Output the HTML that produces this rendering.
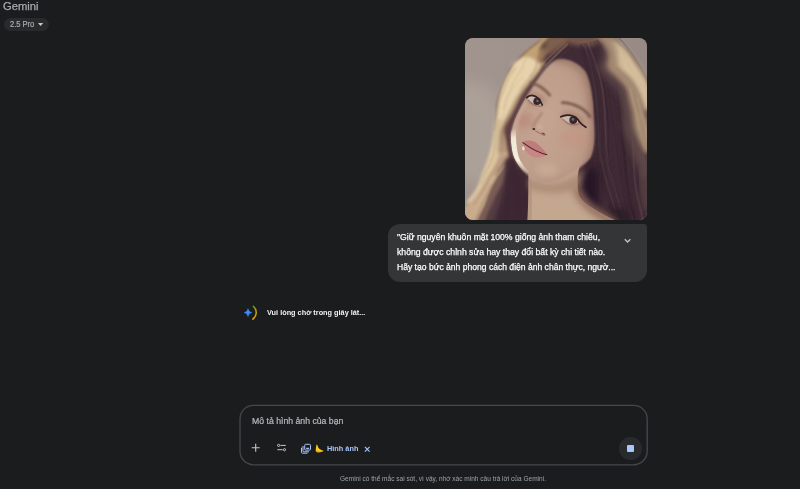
<!DOCTYPE html>
<html lang="vi">
<head>
<meta charset="utf-8">
<title>Gemini</title>
<style>
*{box-sizing:border-box;margin:0;padding:0}
html,body{width:800px;height:489px;overflow:hidden;background:#1b1c1d}
body{position:relative;font-family:"Liberation Sans",sans-serif;color:#e3e3e3}
.abs{position:absolute;white-space:nowrap}
.abs{transform-origin:0 0}
#title{left:3.4px;top:-0.7px;font-size:10.6px;line-height:14px;color:#a6a9ad;-webkit-text-stroke:0.25px #a6a9ad;transform:scaleX(1.06)}
#pill{left:3.5px;top:18px;width:45.5px;height:12.5px;border-radius:7px;background:#282a2c}
#pilltxt{left:9.6px;top:18.8px;font-size:8.2px;line-height:11px;color:#aaadb1;-webkit-text-stroke:0.2px #aaadb1;transform:scaleX(0.918)}
#photo{left:464.8px;top:37.5px;width:182.6px;height:182.6px;border-radius:8px;overflow:hidden;background:#5a4640}
#bubble{left:388px;top:223.8px;width:259.2px;height:58.4px;background:#333537;border-radius:12px 3px 12px 12px}
.bl{left:397.1px;font-size:9.2px;line-height:12px;color:#fff;-webkit-text-stroke:0.25px #fff}
#l1{top:231.3px;transform:scaleX(0.941)}
#l2{top:246.2px;transform:scaleX(0.942)}
#l3{top:260.9px;transform:scaleX(0.932)}
#wait{left:267.4px;top:306.7px;font-size:7.9px;line-height:11px;font-weight:bold;color:#f0f1f2;transform:scaleX(0.9266)}
#ph{left:251.5px;top:414.8px;font-size:8.6px;line-height:12px;color:#b4b7bb;-webkit-text-stroke:0.22px #b4b7bb;transform:scaleX(1.012)}
#chip{left:326.6px;top:442.8px;font-size:7.3px;line-height:11px;font-weight:bold;color:#a8c7fa;transform:scaleX(1.006)}
#stop{left:619.3px;top:437.3px;width:22.4px;height:22.4px;border-radius:50%;background:#282a2d}
#stopsq{left:627.1px;top:445.2px;width:7px;height:7px;border-radius:1px;background:#a8c7fa}
#foot{left:340.2px;top:474px;font-size:6.5px;line-height:10px;color:#a0a3a7;transform:scaleX(1.005)}
svg{position:absolute;overflow:visible}
</style>
</head>
<body>
<div id="title" class="abs">Gemini</div>
<div id="pill" class="abs"></div>
<div id="pilltxt" class="abs">2.5 Pro</div>
<svg id="caretsvg" style="left:37px;top:22px" width="8" height="6" viewBox="0 0 8 6"><path d="M0.9 0.9 H6.3 L3.6 4.1Z" fill="#c3c6ca"/></svg>

<div id="photo" class="abs"><!--PHOTO--><svg width="182.6" height="182.6" viewBox="0 0 182 182" preserveAspectRatio="none" style="left:0;top:0">
<defs>
<filter id="b05" x="-20%" y="-20%" width="140%" height="140%"><feGaussianBlur stdDeviation="0.5"/></filter>
<filter id="b05s" x="-10%" y="-10%" width="120%" height="120%"><feGaussianBlur stdDeviation="0.7"/></filter>
<filter id="b1" x="-20%" y="-20%" width="140%" height="140%"><feGaussianBlur stdDeviation="1.1"/></filter>
<filter id="b2" x="-30%" y="-30%" width="160%" height="160%"><feGaussianBlur stdDeviation="2.2"/></filter>
<filter id="b3" x="-30%" y="-30%" width="160%" height="160%"><feGaussianBlur stdDeviation="3"/></filter>
<filter id="b4" x="-40%" y="-40%" width="180%" height="180%"><feGaussianBlur stdDeviation="4"/></filter>
<filter id="b6" x="-50%" y="-50%" width="200%" height="200%"><feGaussianBlur stdDeviation="6"/></filter>
<filter id="b8" x="-50%" y="-50%" width="200%" height="200%"><feGaussianBlur stdDeviation="8"/></filter>
<linearGradient id="bgg" x1="0" y1="0" x2="1" y2="0"><stop offset="0" stop-color="#a1948f"/><stop offset="0.5" stop-color="#9f918c"/><stop offset="1" stop-color="#978984"/></linearGradient>
<radialGradient id="faceg" cx="0.4" cy="0.5" r="0.7"><stop offset="0" stop-color="#c5a591"/><stop offset="0.6" stop-color="#bf9f8c"/><stop offset="1" stop-color="#b08d7c"/></radialGradient>
<clipPath id="facec"><path d="M91 22 C82 26 76 36 67 49 C59 62 47 82 45.500 98 C46 108 47 116 50.500 122 C54.500 129.500 61 136.500 71 141.500 C78 144.500 86 144 94 141 C104 137 118 128 125 119 C130 108 129 92 128 80 C127.500 64 126 46 120 34 C114 25 100 19 91 22Z"/></clipPath>
<linearGradient id="rimg" gradientUnits="userSpaceOnUse" x1="0" y1="90" x2="0" y2="136"><stop offset="0" stop-color="#f5efdd" stop-opacity="0"/><stop offset="0.22" stop-color="#f5efdd" stop-opacity="0.9"/><stop offset="0.7" stop-color="#f5efdd" stop-opacity="1"/><stop offset="0.85" stop-color="#f0e4d0" stop-opacity="0.5"/><stop offset="1" stop-color="#f0e4d0" stop-opacity="0"/></linearGradient>
<clipPath id="all"><rect width="182" height="182"/></clipPath>
</defs>
<g clip-path="url(#all)">
<rect width="182" height="182" fill="url(#bgg)"/>
<ellipse cx="8" cy="95" rx="32" ry="52" fill="#ada299" filter="url(#b8)" opacity="0.9"/>
<path d="M86 -4 C74 2 58 14 45 30 C38 42 33 56 31 68 C30 84 30 100 28 116 C25 132 18 150 4 168 L2 186 L186 186 L186 47 L182 41 L175.500 30 L168.500 20 L160.500 10 L151 4 L141 -4Z" fill="#3f2c36" filter="url(#b1)"/>
<path d="M104 -3 L140 -3 C138 2 134 7 128 8 C120 9 112 8 104 6Z" fill="#775a50" filter="url(#b2)" opacity="0.95"/>
<g fill="none" filter="url(#b05s)" stroke-linecap="round"><path d="M102.5 6.4 Q64.6 40.3 54.9 59.9 Q45.3 79.4 42.5 95.5 Q39.6 111.6 44.1 128.1 Q48.6 144.5 49.2 164.5 L49.8 184.5" stroke="#5a4040" stroke-width="1.4" opacity="0.17"/><path d="M102.7 6.5 Q67.4 41.2 56.3 60.3 Q45.3 79.4 42.6 95.5 Q39.8 111.5 44.8 127.9 Q49.8 144.2 49.7 164.3 L49.6 184.5" stroke="#c9b08e" stroke-width="1.1" opacity="0.13"/><path d="M99.5 5.0 Q61.5 39.4 51.7 59.0 Q41.9 78.6 39.2 95.7 Q36.5 112.7 38.4 129.7 Q40.3 146.8 38.2 164.6 L36.1 182.5" stroke="#d6c3a6" stroke-width="1.6" opacity="0.19"/><path d="M106.1 8.1 Q69.8 41.9 58.4 60.9 Q47.0 79.8 45.2 95.0 Q43.3 110.2 50.2 126.3 Q57.0 142.3 56.9 163.9 L56.9 185.5" stroke="#6b4f48" stroke-width="1.1" opacity="0.20"/><path d="M96.6 3.7 Q58.4 38.4 49.0 58.3 Q39.6 78.1 36.8 95.9 Q34.1 113.6 34.0 131.0 Q33.9 148.5 30.7 164.8 L27.4 181.2" stroke="#c9b08e" stroke-width="1.3" opacity="0.15"/><path d="M93.9 2.5 Q54.2 37.2 46.5 57.5 Q38.7 77.9 35.1 96.2 Q31.6 114.5 29.5 132.4 Q27.4 150.2 23.6 165.2 L19.8 180.1" stroke="#c9b08e" stroke-width="1.6" opacity="0.23"/><path d="M99.2 4.9 Q61.7 39.5 52.4 59.2 Q43.1 78.9 40.4 95.6 Q37.6 112.3 41.8 128.8 Q46.1 145.2 43.0 164.1 L40.0 183.1" stroke="#4a3238" stroke-width="1.2" opacity="0.31"/><path d="M100.5 5.5 Q65.2 40.5 54.6 59.8 Q43.9 79.1 41.8 95.3 Q39.6 111.6 43.8 128.1 Q48.0 144.7 47.6 164.4 L47.3 184.1" stroke="#5a4040" stroke-width="1.4" opacity="0.30"/><path d="M93.9 2.5 Q56.6 37.9 47.4 57.9 Q38.3 77.8 35.3 96.0 Q32.4 114.2 31.8 131.7 Q31.3 149.2 27.2 164.9 L23.1 180.6" stroke="#4a3238" stroke-width="1.3" opacity="0.23"/><path d="M93.3 2.2 Q57.1 38.0 48.1 58.0 Q39.0 78.0 36.0 96.0 Q32.9 114.0 32.4 131.5 Q31.8 149.1 27.9 164.9 L24.0 180.7" stroke="#6b4f48" stroke-width="1.0" opacity="0.21"/><path d="M98.7 4.7 Q62.1 39.6 52.5 59.2 Q42.9 78.9 39.5 95.9 Q36.2 112.9 37.6 130.0 Q39.0 147.1 38.1 164.9 L37.1 182.6" stroke="#6b4f48" stroke-width="1.9" opacity="0.33"/><path d="M93.8 2.5 Q56.6 37.9 47.7 57.9 Q38.7 77.9 36.0 95.9 Q33.3 113.9 31.7 131.7 Q30.0 149.5 28.7 165.4 L27.3 181.2" stroke="#d6c3a6" stroke-width="1.0" opacity="0.20"/><path d="M98.9 4.8 Q60.5 39.1 51.0 58.8 Q41.4 78.5 38.3 95.9 Q35.1 113.2 36.9 130.2 Q38.7 147.2 38.5 165.0 L38.4 182.8" stroke="#c9b08e" stroke-width="1.2" opacity="0.15"/><path d="M101.7 6.1 Q65.6 40.6 54.6 59.8 Q43.6 79.0 41.0 95.5 Q38.3 112.1 42.8 128.5 Q47.3 144.9 46.6 164.4 L45.9 183.9" stroke="#d6c3a6" stroke-width="1.8" opacity="0.25"/><path d="M132.4 2.5 Q149.6 31.4 151.9 53.9 Q154.3 76.5 157.1 97.2 Q159.9 118.0 160.5 134.0 Q161.2 150.0 166.6 168.0 L171.9 186.0" stroke="#3a2830" stroke-width="1.7" opacity="0.21"/><path d="M119.4 5.9 Q131.4 38.3 134.2 60.4 Q137.1 82.5 135.7 100.2 Q134.4 118.0 137.8 134.0 Q141.2 150.0 148.5 168.0 L155.8 186.0" stroke="#3a2830" stroke-width="1.9" opacity="0.19"/><path d="M150.7 -2.2 Q174.7 21.7 179.8 43.7 Q184.9 65.7 186.2 91.8 Q187.5 118.0 186.7 134.0 Q185.9 150.0 188.7 168.0 L191.5 186.0" stroke="#6a5250" stroke-width="1.9" opacity="0.30"/><path d="M130.5 3.0 Q149.7 31.3 152.2 53.8 Q154.7 76.3 156.7 97.2 Q158.7 118.0 160.7 134.0 Q162.7 150.0 166.5 168.0 L170.3 186.0" stroke="#2e1f28" stroke-width="1.1" opacity="0.19"/><path d="M120.9 5.5 Q136.8 36.2 139.8 58.4 Q142.8 80.5 143.0 99.3 Q143.2 118.0 145.4 134.0 Q147.7 150.0 154.1 168.0 L160.5 186.0" stroke="#2e1f28" stroke-width="1.0" opacity="0.32"/><path d="M129.3 3.3 Q143.8 33.5 148.5 55.2 Q153.1 76.9 152.4 97.4 Q151.8 118.0 154.9 134.0 Q158.1 150.0 162.0 168.0 L165.9 186.0" stroke="#3a2830" stroke-width="1.4" opacity="0.23"/><path d="M148.9 -1.7 Q169.9 23.6 174.5 45.6 Q179.1 67.7 180.5 92.9 Q182.0 118.0 184.7 134.0 Q187.4 150.0 189.2 168.0 L191.1 186.0" stroke="#5e4a4a" stroke-width="1.7" opacity="0.30"/><path d="M127.4 3.8 Q141.7 34.4 144.0 56.8 Q146.3 79.3 149.5 98.6 Q152.7 118.0 154.5 134.0 Q156.3 150.0 161.2 168.0 L166.1 186.0" stroke="#33232b" stroke-width="1.1" opacity="0.35"/><path d="M143.9 -0.4 Q166.7 24.8 172.0 46.6 Q177.2 68.4 179.3 93.2 Q181.3 118.0 181.1 134.0 Q180.8 150.0 184.0 168.0 L187.1 186.0" stroke="#2e1f28" stroke-width="1.3" opacity="0.33"/><path d="M131.3 2.8 Q150.4 31.0 152.4 53.7 Q154.3 76.4 156.4 97.2 Q158.5 118.0 159.7 134.0 Q160.9 150.0 165.7 168.0 L170.5 186.0" stroke="#2e1f28" stroke-width="1.9" opacity="0.32"/><path d="M137.3 1.3 Q154.0 29.7 157.4 51.9 Q160.9 74.1 163.1 96.1 Q165.4 118.0 165.9 134.0 Q166.5 150.0 170.6 168.0 L174.6 186.0" stroke="#3a2830" stroke-width="1.9" opacity="0.26"/><path d="M118.9 6.0 Q130.8 38.5 132.7 61.0 Q134.5 83.4 136.1 100.7 Q137.6 118.0 140.5 134.0 Q143.3 150.0 149.9 168.0 L156.5 186.0" stroke="#2e1f28" stroke-width="1.7" opacity="0.24"/><path d="M132.7 2.4 Q151.7 30.6 154.4 53.0 Q157.0 75.5 158.0 96.7 Q159.0 118.0 161.1 134.0 Q163.2 150.0 168.6 168.0 L174.0 186.0" stroke="#33232b" stroke-width="2.0" opacity="0.33"/><path d="M121.9 5.2 Q136.1 36.5 138.2 58.9 Q140.4 81.4 140.4 99.7 Q140.5 118.0 144.7 134.0 Q149.0 150.0 154.4 168.0 L159.8 186.0" stroke="#7a625c" stroke-width="2.1" opacity="0.26"/><path d="M121.2 5.4 Q135.0 36.9 135.7 59.8 Q136.4 82.7 138.7 100.4 Q141.0 118.0 144.5 134.0 Q148.1 150.0 152.6 168.0 L157.1 186.0" stroke="#33232b" stroke-width="1.0" opacity="0.33"/><path d="M137.4 1.2 Q159.4 27.6 164.0 49.5 Q168.7 71.4 168.1 94.7 Q167.5 118.0 169.3 134.0 Q171.0 150.0 174.6 168.0 L178.1 186.0" stroke="#7a625c" stroke-width="1.6" opacity="0.12"/><path d="M128.7 3.5 Q146.9 32.4 150.7 54.4 Q154.5 76.4 154.8 97.2 Q155.2 118.0 156.5 134.0 Q157.8 150.0 164.7 168.0 L171.6 186.0" stroke="#2e1f28" stroke-width="1.2" opacity="0.17"/><path d="M145.6 -0.9 Q170.8 23.2 175.7 45.2 Q180.6 67.2 182.1 92.6 Q183.6 118.0 183.9 134.0 Q184.2 150.0 187.1 168.0 L190.0 186.0" stroke="#5e4a4a" stroke-width="1.6" opacity="0.29"/><path d="M138.1 1.1 Q157.8 28.2 163.3 49.8 Q168.8 71.3 169.2 94.7 Q169.5 118.0 170.2 134.0 Q170.9 150.0 176.3 168.0 L181.8 186.0" stroke="#33232b" stroke-width="2.0" opacity="0.17"/><path d="M118.6 6.1 Q129.9 38.9 131.3 61.5 Q132.7 84.0 133.4 101.0 Q134.1 118.0 138.8 134.0 Q143.5 150.0 148.6 168.0 L153.7 186.0" stroke="#5e4a4a" stroke-width="2.1" opacity="0.25"/><path d="M148.1 -1.5 Q171.1 23.1 177.9 44.4 Q184.7 65.8 185.3 91.9 Q186.0 118.0 186.3 134.0 Q186.6 150.0 188.1 168.0 L189.6 186.0" stroke="#3a2830" stroke-width="1.3" opacity="0.19"/><path d="M114.8 7.1 Q126.1 40.4 129.1 62.3 Q132.2 84.2 131.8 101.1 Q131.3 118.0 134.3 134.0 Q137.4 150.0 145.0 168.0 L152.6 186.0" stroke="#2e1f28" stroke-width="1.7" opacity="0.28"/><path d="M138.1 1.1 Q159.7 27.5 163.8 49.6 Q168.0 71.6 167.2 94.8 Q166.3 118.0 167.9 134.0 Q169.4 150.0 173.3 168.0 L177.2 186.0" stroke="#5e4a4a" stroke-width="1.0" opacity="0.25"/><path d="M151.3 -2.3 Q175.1 21.6 177.9 44.4 Q180.8 67.1 184.0 92.6 Q187.1 118.0 188.2 134.0 Q189.4 150.0 190.3 168.0 L191.3 186.0" stroke="#5e4a4a" stroke-width="2.0" opacity="0.27"/><path d="M137.7 1.2 Q157.3 28.4 161.2 50.5 Q165.1 72.7 166.5 95.3 Q168.0 118.0 168.9 134.0 Q169.8 150.0 174.2 168.0 L178.6 186.0" stroke="#7a625c" stroke-width="1.6" opacity="0.30"/><path d="M125.2 4.4 Q137.6 35.9 140.0 58.3 Q142.4 80.6 141.8 99.3 Q141.1 118.0 145.4 134.0 Q149.6 150.0 155.7 168.0 L161.7 186.0" stroke="#2e1f28" stroke-width="1.9" opacity="0.20"/><path d="M119.3 5.9 Q129.6 39.0 132.5 61.1 Q135.4 83.1 135.0 100.6 Q134.6 118.0 138.1 134.0 Q141.5 150.0 148.8 168.0 L156.2 186.0" stroke="#5e4a4a" stroke-width="1.0" opacity="0.27"/><path d="M147.2 -1.3 Q169.4 23.8 174.5 45.6 Q179.6 67.5 180.9 92.8 Q182.1 118.0 182.4 134.0 Q182.6 150.0 184.7 168.0 L186.8 186.0" stroke="#2e1f28" stroke-width="2.0" opacity="0.16"/><path d="M146.7 -1.1 Q170.0 23.5 174.9 45.5 Q179.9 67.5 179.3 92.7 Q178.8 118.0 180.8 134.0 Q182.7 150.0 185.2 168.0 L187.7 186.0" stroke="#2e1f28" stroke-width="1.6" opacity="0.32"/><path d="M146.9 -1.2 Q169.9 23.6 173.3 46.1 Q176.8 68.5 177.5 93.3 Q178.2 118.0 179.5 134.0 Q180.8 150.0 184.0 168.0 L187.2 186.0" stroke="#7a625c" stroke-width="1.7" opacity="0.22"/><path d="M137.6 1.2 Q156.4 28.7 158.8 51.4 Q161.1 74.0 164.3 96.0 Q167.4 118.0 169.0 134.0 Q170.6 150.0 173.8 168.0 L177.1 186.0" stroke="#3a2830" stroke-width="1.8" opacity="0.26"/><path d="M132.7 2.5 Q150.9 30.8 152.5 53.7 Q154.2 76.5 156.3 97.3 Q158.5 118.0 159.4 134.0 Q160.3 150.0 166.0 168.0 L171.6 186.0" stroke="#33232b" stroke-width="2.1" opacity="0.17"/><path d="M123.5 4.8 Q141.1 34.6 142.5 57.4 Q143.9 80.1 145.4 99.1 Q146.9 118.0 149.2 134.0 Q151.5 150.0 157.8 168.0 L164.1 186.0" stroke="#3a2830" stroke-width="0.8" opacity="0.26"/><path d="M116.3 6.7 Q130.7 38.6 132.5 61.0 Q134.3 83.5 134.4 100.7 Q134.5 118.0 137.2 134.0 Q140.0 150.0 147.2 168.0 L154.5 186.0" stroke="#33232b" stroke-width="2.2" opacity="0.30"/></g>
<g filter="url(#b1)"><path d="M84.0 -3.0 Q78.0 5.0 79.0 7.0 Q80.0 9.0 80.0 11.0 Q80.0 13.0 80.0 14.5 L80.0 16.0 L85.0 16.0 Q89.0 13.0 92.0 11.0 Q95.0 9.0 99.5 7.0 Q104.0 5.0 106.0 1.0 L108.0 -3.0Z" fill="#7e5f4e" filter="url(#b2)" opacity="1.00"/>
<path d="M72.0 10.0 Q70.0 20.0 69.0 23.0 L68.0 26.0 L76.0 26.0 Q80.0 20.0 81.0 15.0 L82.0 10.0Z" fill="#9a7858" filter="url(#b2)" opacity="1.00"/>
<path d="M80.0 -3.0 Q73.0 4.0 68.5 7.0 Q64.0 10.0 59.0 15.0 Q54.0 20.0 51.0 24.0 L48.0 28.0 L70.0 28.0 Q73.0 20.0 73.5 15.0 Q74.0 10.0 76.5 7.0 Q79.0 4.0 82.0 0.5 L85.0 -3.0Z" fill="#c2a274" filter="url(#b1)" opacity="1.00"/>
<path d="M70.0 24.0 Q70.0 30.0 67.0 34.5 Q64.0 39.0 59.0 45.0 Q54.0 51.0 51.5 56.0 Q49.0 61.0 47.0 66.0 Q45.0 71.0 42.0 76.0 Q39.0 81.0 36.5 86.0 Q34.0 91.0 33.5 98.0 Q33.0 105.0 32.8 111.5 Q32.5 118.0 30.2 123.0 Q28.0 128.0 24.5 133.0 Q21.0 138.0 19.5 142.0 Q18.0 146.0 14.5 151.0 Q11.0 156.0 7.0 161.0 Q3.0 166.0 0.0 171.0 Q-3.0 176.0 -3.5 181.0 L-4.0 186.0 L12.0 186.0 Q16.0 176.0 18.5 171.0 Q21.0 166.0 22.5 161.0 Q24.0 156.0 26.0 151.0 Q28.0 146.0 30.5 142.0 Q33.0 138.0 37.0 133.0 Q41.0 128.0 42.8 123.0 Q44.5 118.0 43.5 111.5 Q42.5 105.0 40.8 98.0 Q39.0 91.0 42.0 86.0 Q45.0 81.0 47.8 76.0 Q50.5 71.0 52.8 66.0 Q55.0 61.0 58.0 56.0 Q61.0 51.0 66.0 45.0 Q71.0 39.0 74.5 34.5 Q78.0 30.0 79.0 27.0 L80.0 24.0Z" fill="#b79678" filter="url(#b1)" opacity="1.00"/>
<path d="M32.0 114.0 Q31.0 120.0 29.0 124.0 Q27.0 128.0 23.5 133.0 Q20.0 138.0 18.5 142.0 Q17.0 146.0 13.5 151.0 Q10.0 156.0 6.0 161.0 Q2.0 166.0 -1.0 171.0 Q-4.0 176.0 -4.0 181.0 L-4.0 186.0 L12.0 186.0 Q16.0 176.0 18.5 171.0 Q21.0 166.0 22.5 161.0 Q24.0 156.0 26.0 151.0 Q28.0 146.0 30.5 142.0 Q33.0 138.0 37.0 133.0 Q41.0 128.0 42.5 124.0 Q44.0 120.0 44.0 117.0 L44.0 114.0Z" fill="#c8a98b" filter="url(#b1)" opacity="1.00"/>
<path d="M38.0 132.0 Q37.0 138.0 37.0 142.0 Q37.0 146.0 33.5 151.0 Q30.0 156.0 28.0 161.0 Q26.0 166.0 24.0 171.0 Q22.0 176.0 20.5 181.0 L19.0 186.0 L34.0 186.0 Q36.0 176.0 37.0 171.0 Q38.0 166.0 40.0 161.0 Q42.0 156.0 45.0 151.0 Q48.0 146.0 46.0 142.0 Q44.0 138.0 44.0 135.0 L44.0 132.0Z" fill="#553c42" filter="url(#b2)" opacity="1.00"/>
<path d="M40.0 122.0 Q33.0 130.0 32.0 134.0 Q31.0 138.0 29.0 142.0 Q27.0 146.0 25.0 151.0 Q23.0 156.0 21.0 161.0 Q19.0 166.0 16.5 171.0 Q14.0 176.0 12.0 181.0 L10.0 186.0 L19.0 186.0 Q22.0 176.0 24.5 171.0 Q27.0 166.0 29.0 161.0 Q31.0 156.0 34.5 151.0 Q38.0 146.0 39.0 142.0 Q40.0 138.0 42.0 134.0 Q44.0 130.0 45.0 126.0 L46.0 122.0Z" fill="#7a5c55" filter="url(#b1)" opacity="1.00"/>
<path d="M77.0 28.0 Q70.0 39.0 65.0 45.0 Q60.0 51.0 57.0 56.0 Q54.0 61.0 51.8 66.0 Q49.5 71.0 46.8 76.0 Q44.0 81.0 41.0 86.0 Q38.0 91.0 39.5 95.5 Q41.0 100.0 41.8 105.0 Q42.5 110.0 43.2 115.0 L44.0 120.0 L48.0 120.0 Q46.0 110.0 45.8 105.0 Q45.5 100.0 45.5 95.5 Q45.5 91.0 47.8 86.0 Q50.0 81.0 52.5 76.0 Q55.0 71.0 57.8 66.0 Q60.5 61.0 63.2 56.0 Q66.0 51.0 70.2 45.0 Q74.5 39.0 78.2 33.5 L82.0 28.0Z" fill="#5f3f43" filter="url(#b1)" opacity="0.97"/>
<path d="M58.0 19.0 Q50.0 23.0 48.5 25.0 Q47.0 27.0 46.2 28.5 Q45.5 30.0 42.8 34.5 Q40.0 39.0 37.7 45.0 Q35.4 51.0 34.0 56.0 Q32.5 61.0 31.8 66.0 Q31.0 71.0 30.5 76.0 Q30.0 81.0 29.5 86.0 Q29.0 91.0 28.2 98.0 Q27.5 105.0 25.8 111.5 Q24.0 118.0 22.0 123.0 Q20.0 128.0 18.0 133.0 Q16.0 138.0 15.0 142.0 Q14.0 146.0 11.0 151.0 Q8.0 156.0 4.5 160.0 L1.0 164.0 L5.0 164.0 Q12.0 156.0 15.2 151.0 Q18.5 146.0 20.2 142.0 Q22.0 138.0 25.5 133.0 Q29.0 128.0 31.0 123.0 Q33.0 118.0 33.2 111.5 Q33.5 105.0 34.0 98.0 Q34.5 91.0 37.2 86.0 Q40.0 81.0 43.0 76.0 Q46.0 71.0 48.0 66.0 Q50.0 61.0 53.5 56.0 Q57.0 51.0 62.5 45.0 Q68.0 39.0 71.5 34.5 Q75.0 30.0 75.0 28.5 Q75.0 27.0 73.5 25.0 Q72.0 23.0 68.0 21.0 L64.0 19.0Z" fill="#e6d2ac" filter="url(#b1)" opacity="1.00"/>
<path d="M135.0 6.0 Q138.0 12.0 138.0 16.0 Q138.0 20.0 135.0 25.0 Q132.0 30.0 136.0 35.0 Q140.0 40.0 145.5 45.0 Q151.0 50.0 153.0 55.0 Q155.0 60.0 156.5 67.5 Q158.0 75.0 157.5 82.5 Q157.0 90.0 160.0 97.5 Q163.0 105.0 165.5 112.5 Q168.0 120.0 171.0 126.0 Q174.0 132.0 177.0 136.0 L180.0 140.0 L186.0 140.0 Q186.0 132.0 186.0 126.0 Q186.0 120.0 180.0 112.5 Q174.0 105.0 172.0 97.5 Q170.0 90.0 169.0 82.5 Q168.0 75.0 166.0 67.5 Q164.0 60.0 162.0 55.0 Q160.0 50.0 154.5 45.0 Q149.0 40.0 145.0 35.0 Q141.0 30.0 143.0 25.0 Q145.0 20.0 145.0 16.0 Q145.0 12.0 143.0 9.0 L141.0 6.0Z" fill="#5e4a48" filter="url(#b3)" opacity="0.95"/>
<path d="M130.0 -3.0 Q136.0 4.0 139.0 8.0 Q142.0 12.0 142.5 16.0 Q143.0 20.0 141.5 25.0 Q140.0 30.0 145.5 35.0 Q151.0 40.0 156.0 45.0 Q161.0 50.0 162.0 55.0 Q163.0 60.0 165.0 67.5 Q167.0 75.0 167.5 82.5 Q168.0 90.0 171.0 97.5 Q174.0 105.0 176.5 109.5 L179.0 114.0 L186.0 114.0 Q186.0 105.0 186.0 97.5 Q186.0 90.0 183.0 82.5 Q180.0 75.0 178.0 67.5 Q176.0 60.0 174.5 55.0 Q173.0 50.0 169.0 45.0 Q165.0 40.0 159.5 35.0 Q154.0 30.0 155.0 25.0 Q156.0 20.0 155.0 16.0 Q154.0 12.0 153.0 8.0 Q152.0 4.0 150.0 0.5 L148.0 -3.0Z" fill="#a58a72" filter="url(#b2)" opacity="1.00"/>
<path d="M147.0 3.0 Q150.0 8.0 150.5 10.0 Q151.0 12.0 151.5 16.0 Q152.0 20.0 152.0 25.0 Q152.0 30.0 158.0 35.0 Q164.0 40.0 167.5 45.0 Q171.0 50.0 173.0 55.0 Q175.0 60.0 177.0 66.0 L179.0 72.0 L186.0 72.0 Q186.0 60.0 185.5 55.0 Q185.0 50.0 183.0 45.0 Q181.0 40.0 178.0 35.0 Q175.0 30.0 171.5 25.0 Q168.0 20.0 165.0 16.0 Q162.0 12.0 160.0 10.0 Q158.0 8.0 154.5 5.5 L151.0 3.0Z" fill="#d6c09c" filter="url(#b2)" opacity="1.00"/>
<g fill="none" stroke-linecap="round" filter="url(#b05)"><path d="M32.8 81.0 Q31.0 91.0 30.2 98.0 Q29.3 105.0 28.2 111.5 Q27.2 118.0 25.0 123.0 Q22.8 128.0 20.4 133.0 Q18.0 138.0 16.6 142.0 L15.2 146.0" stroke="#c4a67e" stroke-width="1.1" opacity="0.32"/><path d="M32.1 105.0 Q30.5 118.0 28.7 123.0 Q27.0 128.0 23.8 133.0 Q20.6 138.0 18.8 142.0 Q17.1 146.0 13.9 151.0 Q10.7 156.0 7.3 160.0 L3.8 164.0" stroke="#cdb088" stroke-width="0.9" opacity="0.55"/><path d="M57.6 39.0 Q46.7 51.0 44.4 56.0 Q42.2 61.0 41.0 66.0 Q39.9 71.0 38.0 76.0 Q36.0 81.0 34.2 86.0 L32.3 91.0" stroke="#c4a67e" stroke-width="0.7" opacity="0.56"/><path d="M70.9 23.0 Q72.2 27.0 71.7 28.5 Q71.2 30.0 68.0 34.5 L64.8 39.0" stroke="#c4a67e" stroke-width="1.4" opacity="0.59"/><path d="M27.4 118.0 Q22.8 128.0 20.6 133.0 Q18.5 138.0 17.1 142.0 Q15.8 146.0 12.5 151.0 L9.3 156.0" stroke="#cdb088" stroke-width="0.9" opacity="0.38"/><path d="M43.5 51.0 Q38.1 61.0 37.4 66.0 Q36.7 71.0 35.0 76.0 Q33.4 81.0 32.2 86.0 Q30.9 91.0 30.4 98.0 L30.0 105.0" stroke="#f0e0c0" stroke-width="0.8" opacity="0.48"/><path d="M30.2 91.0 Q29.1 105.0 27.8 111.5 Q26.5 118.0 24.3 123.0 Q22.1 128.0 19.8 133.0 Q17.4 138.0 16.4 142.0 L15.3 146.0" stroke="#cdb088" stroke-width="1.1" opacity="0.37"/><path d="M33.1 91.0 Q32.3 105.0 31.7 111.5 Q31.0 118.0 29.1 123.0 Q27.3 128.0 23.9 133.0 L20.5 138.0" stroke="#f0e0c0" stroke-width="0.8" opacity="0.54"/><path d="M33.8 81.0 Q31.2 91.0 30.3 98.0 Q29.5 105.0 28.5 111.5 Q27.5 118.0 25.5 123.0 Q23.5 128.0 20.7 133.0 L17.8 138.0" stroke="#cdb088" stroke-width="1.3" opacity="0.56"/><path d="M33.1 91.0 Q32.3 105.0 31.6 111.5 Q30.8 118.0 29.1 123.0 L27.3 128.0" stroke="#cdb088" stroke-width="0.7" opacity="0.59"/><path d="M36.0 81.0 Q31.8 91.0 31.5 98.0 Q31.1 105.0 30.0 111.5 Q29.0 118.0 27.0 123.0 Q25.1 128.0 22.1 133.0 Q19.2 138.0 17.9 142.0 L16.6 146.0" stroke="#c4a67e" stroke-width="1.0" opacity="0.53"/><path d="M31.0 81.0 Q29.5 91.0 28.8 98.0 Q28.1 105.0 26.7 111.5 L25.3 118.0" stroke="#f0e0c0" stroke-width="1.2" opacity="0.47"/><path d="M50.5 30.0 Q42.8 39.0 41.3 45.0 Q39.7 51.0 37.0 56.0 Q34.3 61.0 33.9 66.0 Q33.5 71.0 32.7 76.0 Q31.9 81.0 30.8 86.0 L29.7 91.0" stroke="#b8986c" stroke-width="1.3" opacity="0.58"/><path d="M60.8 19.0 Q60.0 23.0 59.0 25.0 Q57.9 27.0 57.8 28.5 Q57.7 30.0 54.1 34.5 Q50.5 39.0 47.9 45.0 Q45.3 51.0 42.7 56.0 Q40.2 61.0 39.1 66.0 L38.0 71.0" stroke="#c4a67e" stroke-width="1.1" opacity="0.50"/><path d="M34.0 81.0 Q31.0 91.0 30.7 98.0 Q30.4 105.0 29.1 111.5 Q27.9 118.0 25.8 123.0 Q23.8 128.0 21.1 133.0 L18.3 138.0" stroke="#b8986c" stroke-width="1.3" opacity="0.37"/><path d="M32.1 81.0 Q30.5 91.0 29.9 98.0 Q29.4 105.0 27.9 111.5 Q26.3 118.0 24.5 123.0 Q22.6 128.0 20.0 133.0 Q17.3 138.0 16.3 142.0 Q15.3 146.0 12.2 151.0 Q9.2 156.0 5.7 160.0 L2.1 164.0" stroke="#f0e0c0" stroke-width="0.7" opacity="0.42"/></g>
<g fill="none" stroke-linecap="round" filter="url(#b05)"><path d="M42.0 118.0 Q38.8 128.0 35.2 133.0 Q31.6 138.0 29.2 142.0 Q26.7 146.0 24.3 151.0 Q21.8 156.0 20.2 161.0 Q18.5 166.0 15.9 171.0 Q13.2 176.0 11.6 181.0 L10.0 186.0" stroke="#d2b892" stroke-width="1.4" opacity="0.57"/><path d="M41.5 81.0 Q35.8 91.0 36.2 98.0 Q36.7 105.0 36.9 111.5 Q37.2 118.0 34.7 123.0 Q32.3 128.0 28.9 133.0 Q25.5 138.0 23.8 142.0 Q22.1 146.0 19.1 151.0 Q16.0 156.0 12.3 161.0 L8.6 166.0" stroke="#8f7058" stroke-width="1.0" opacity="0.37"/><path d="M72.6 30.0 Q66.5 39.0 61.5 45.0 Q56.5 51.0 53.6 56.0 Q50.7 61.0 48.6 66.0 Q46.5 71.0 43.6 76.0 L40.7 81.0" stroke="#a08064" stroke-width="0.6" opacity="0.44"/><path d="M28.9 138.0 Q25.0 146.0 22.5 151.0 Q20.1 156.0 17.9 161.0 Q15.8 166.0 12.8 171.0 Q9.9 176.0 8.6 181.0 L7.4 186.0" stroke="#d2b892" stroke-width="1.2" opacity="0.53"/><path d="M66.8 39.0 Q56.3 51.0 53.8 56.0 Q51.3 61.0 49.3 66.0 Q47.3 71.0 44.3 76.0 Q41.3 81.0 38.5 86.0 L35.8 91.0" stroke="#d2b892" stroke-width="1.0" opacity="0.33"/><path d="M68.1 39.0 Q57.9 51.0 55.1 56.0 Q52.3 61.0 50.1 66.0 L47.9 71.0" stroke="#a08064" stroke-width="1.0" opacity="0.37"/><path d="M30.2 138.0 Q25.6 146.0 22.8 151.0 Q20.1 156.0 17.8 161.0 Q15.6 166.0 13.2 171.0 L10.8 176.0" stroke="#d2b892" stroke-width="1.1" opacity="0.56"/><path d="M37.6 128.0 Q30.7 138.0 28.0 142.0 Q25.4 146.0 23.1 151.0 Q20.9 156.0 18.8 161.0 Q16.7 166.0 14.3 171.0 Q11.9 176.0 10.4 181.0 L8.9 186.0" stroke="#8f7058" stroke-width="1.1" opacity="0.52"/><path d="M71.5 24.0 Q71.1 30.0 68.0 34.5 Q64.8 39.0 59.9 45.0 L54.9 51.0" stroke="#a08064" stroke-width="1.1" opacity="0.45"/><path d="M47.6 71.0 Q42.4 81.0 39.6 86.0 Q36.8 91.0 37.1 98.0 L37.4 105.0" stroke="#8f7058" stroke-width="0.9" opacity="0.55"/></g>
<g fill="none" stroke-linecap="round" filter="url(#b05)"><path d="M29.4 138.0 Q24.1 146.0 21.9 151.0 Q19.6 156.0 16.7 161.0 Q13.9 166.0 11.8 171.0 L9.6 176.0" stroke="#e0caa6" stroke-width="1.3" opacity="0.52"/><path d="M36.4 120.0 Q33.0 128.0 28.9 133.0 Q24.9 138.0 22.9 142.0 Q20.9 146.0 18.1 151.0 L15.3 156.0" stroke="#b0927a" stroke-width="0.6" opacity="0.48"/><path d="M38.5 114.0 Q37.2 120.0 35.9 124.0 Q34.5 128.0 30.6 133.0 Q26.7 138.0 24.5 142.0 L22.3 146.0" stroke="#e0caa6" stroke-width="0.6" opacity="0.45"/><path d="M38.7 128.0 Q30.5 138.0 28.3 142.0 Q26.1 146.0 23.7 151.0 Q21.2 156.0 20.1 161.0 Q19.0 166.0 16.1 171.0 L13.2 176.0" stroke="#e0caa6" stroke-width="1.2" opacity="0.59"/><path d="M38.2 114.0 Q36.9 120.0 35.4 124.0 Q33.9 128.0 30.6 133.0 L27.4 138.0" stroke="#a88a70" stroke-width="0.6" opacity="0.45"/><path d="M27.2 138.0 Q22.9 146.0 19.9 151.0 Q16.8 156.0 14.2 161.0 Q11.6 166.0 8.7 171.0 Q5.8 176.0 5.1 181.0 L4.4 186.0" stroke="#e0caa6" stroke-width="0.7" opacity="0.39"/><path d="M26.4 146.0 Q20.7 156.0 19.2 161.0 Q17.7 166.0 15.2 171.0 Q12.6 176.0 11.0 181.0 L9.4 186.0" stroke="#b0927a" stroke-width="0.9" opacity="0.42"/><path d="M34.9 120.0 Q30.9 128.0 27.1 133.0 Q23.4 138.0 22.0 142.0 Q20.6 146.0 17.5 151.0 L14.4 156.0" stroke="#a88a70" stroke-width="1.3" opacity="0.33"/><path d="M36.6 128.0 Q29.2 138.0 26.5 142.0 Q23.8 146.0 21.7 151.0 Q19.6 156.0 16.7 161.0 Q13.8 166.0 11.6 171.0 L9.4 176.0" stroke="#a88a70" stroke-width="0.7" opacity="0.42"/><path d="M26.9 146.0 Q21.9 156.0 19.9 161.0 Q17.8 166.0 15.3 171.0 L12.9 176.0" stroke="#a88a70" stroke-width="0.8" opacity="0.59"/></g>
<g fill="none" stroke-linecap="round" filter="url(#b05)"><path d="M140.6 4.0 Q146.0 12.0 146.5 16.0 Q147.0 20.0 145.8 25.0 Q144.6 30.0 149.9 35.0 L155.2 40.0" stroke="#8a7060" stroke-width="0.7" opacity="0.44"/><path d="M147.3 20.0 Q144.8 30.0 149.9 35.0 Q154.9 40.0 159.8 45.0 L164.7 50.0" stroke="#c4aa88" stroke-width="0.6" opacity="0.39"/><path d="M151.9 20.0 Q149.2 30.0 154.4 35.0 Q159.7 40.0 164.3 45.0 Q169.0 50.0 169.8 55.0 Q170.6 60.0 172.9 67.5 Q175.3 75.0 177.1 82.5 L178.9 90.0" stroke="#8a7060" stroke-width="0.7" opacity="0.37"/><path d="M164.1 50.0 Q166.2 60.0 168.6 67.5 Q171.0 75.0 172.2 82.5 Q173.4 90.0 175.5 97.5 Q177.7 105.0 179.2 109.5 L180.8 114.0" stroke="#c4aa88" stroke-width="1.3" opacity="0.39"/><path d="M152.2 30.0 Q163.4 40.0 167.1 45.0 Q170.7 50.0 172.7 55.0 Q174.7 60.0 176.3 67.5 L177.9 75.0" stroke="#7e6658" stroke-width="1.0" opacity="0.57"/><path d="M148.8 20.0 Q146.4 30.0 152.3 35.0 Q158.2 40.0 162.5 45.0 Q166.9 50.0 168.4 55.0 Q169.9 60.0 171.5 67.5 L173.1 75.0" stroke="#8a7060" stroke-width="0.8" opacity="0.44"/><path d="M173.8 60.0 Q177.3 75.0 179.6 82.5 Q182.0 90.0 182.7 97.5 Q183.5 105.0 184.3 109.5 L185.0 114.0" stroke="#8a7060" stroke-width="1.4" opacity="0.31"/><path d="M163.9 50.0 Q166.1 60.0 168.5 67.5 Q171.0 75.0 171.8 82.5 L172.6 90.0" stroke="#c4aa88" stroke-width="1.4" opacity="0.35"/><path d="M171.9 60.0 Q175.7 75.0 177.9 82.5 Q180.1 90.0 181.4 97.5 Q182.7 105.0 183.2 109.5 L183.7 114.0" stroke="#c4aa88" stroke-width="1.1" opacity="0.58"/><path d="M173.1 60.0 Q176.9 75.0 179.2 82.5 Q181.6 90.0 182.4 97.5 Q183.2 105.0 183.9 109.5 L184.7 114.0" stroke="#c4aa88" stroke-width="0.7" opacity="0.39"/></g>
<g fill="none" stroke-linecap="round" filter="url(#b05)"><path d="M157.3 12.0 Q161.4 20.0 163.1 25.0 Q164.7 30.0 168.4 35.0 Q172.2 40.0 175.4 45.0 Q178.7 50.0 179.8 55.0 Q181.0 60.0 181.9 66.0 L182.8 72.0" stroke="#c4aa88" stroke-width="0.7" opacity="0.50"/><path d="M156.2 12.0 Q158.9 20.0 159.8 25.0 Q160.8 30.0 166.3 35.0 L171.9 40.0" stroke="#c4aa88" stroke-width="0.8" opacity="0.31"/><path d="M160.3 30.0 Q171.2 40.0 173.7 45.0 Q176.2 50.0 178.0 55.0 L179.7 60.0" stroke="#e6d4b0" stroke-width="1.1" opacity="0.34"/><path d="M156.8 8.0 Q160.3 12.0 162.7 16.0 Q165.0 20.0 167.5 25.0 Q170.0 30.0 174.2 35.0 L178.4 40.0" stroke="#c4aa88" stroke-width="1.4" opacity="0.34"/><path d="M157.2 8.0 Q160.5 12.0 163.2 16.0 Q165.8 20.0 168.1 25.0 Q170.4 30.0 173.9 35.0 L177.4 40.0" stroke="#b8a080" stroke-width="1.0" opacity="0.35"/><path d="M157.6 30.0 Q168.2 40.0 171.5 45.0 Q174.7 50.0 176.4 55.0 L178.1 60.0" stroke="#b8a080" stroke-width="0.6" opacity="0.41"/><path d="M156.5 20.0 Q156.3 30.0 162.5 35.0 Q168.7 40.0 171.5 45.0 Q174.2 50.0 176.1 55.0 Q177.9 60.0 179.3 66.0 L180.7 72.0" stroke="#c4aa88" stroke-width="1.0" opacity="0.46"/><path d="M154.1 8.0 Q155.8 12.0 157.8 16.0 Q159.8 20.0 161.9 25.0 Q164.1 30.0 168.4 35.0 Q172.8 40.0 174.9 45.0 L177.1 50.0" stroke="#c4aa88" stroke-width="1.3" opacity="0.34"/></g></g>
<path d="M46 118 C48 128 54 136 60 142 C62 156 62 170 60 186 L28 186 C36 166 42 142 40 120Z" fill="#3c2832" filter="url(#b2)" opacity="0.95"/>
<path d="M126 128 C120 136 111 142 113 152 C116 161 123 168 131 173 C134 160 134 144 133 130Z" fill="#281926" filter="url(#b3)" opacity="0.97"/>
<path d="M127 118 C122 128 113 138 112 148" fill="none" stroke="#35212d" stroke-width="5" filter="url(#b2)" opacity="0.9"/>
<ellipse cx="154" cy="178" rx="11" ry="9" fill="#2b1b28" filter="url(#b3)" opacity="0.9"/>
<path d="M176 130 C178 146 180 160 182 172" fill="none" stroke="#604c4a" stroke-width="7" filter="url(#b3)" opacity="0.8"/>
<path d="M63 120 C63.500 140 63.500 160 62 186 L156 186 L150 182 C144 179 134 174 128 170 C122 166 116 162 113.500 156 C111 146 112 132 116 122Z" fill="#c4a78f" filter="url(#b05s)"/>
<path d="M64 138 C74 147 90 147 100 142 C108 139 114 134 118 128 L115 150 C100 156 78 156 64 150Z" fill="#a98672" filter="url(#b3)" opacity="0.8"/>
<path d="M65 140 C66 156 65 170 63.500 186" fill="none" stroke="#a88874" stroke-width="4" filter="url(#b2)" opacity="0.8"/>
<path d="M112 150 C114 162 126 172 150 185" fill="none" stroke="#8f6a5c" stroke-width="8" filter="url(#b3)" opacity="0.9"/>
<path d="M91 22 C82 26 76 36 67 49 C59 62 47 82 45.500 98 C46 108 47 116 50.500 122 C54.500 129.500 61 136.500 71 141.500 C78 144.500 86 144 94 141 C104 137 118 128 125 119 C130 108 129 92 128 80 C127.500 64 126 46 120 34 C114 25 100 19 91 22Z" fill="url(#faceg)" filter="url(#b1)"/>
<g clip-path="url(#facec)">
<path d="M88 22 C100 20 114 26 120 36 C125 48 127 64 128 80" fill="none" stroke="#8d6a60" stroke-width="5" filter="url(#b3)" opacity="0.7"/>
<ellipse cx="58" cy="82" rx="10" ry="8" fill="#ba877c" opacity="0.8" filter="url(#b4)"/>
<ellipse cx="108" cy="100" rx="14" ry="9" fill="#c4927f" opacity="0.6" filter="url(#b4)"/>
<ellipse cx="70" cy="61" rx="10.500" ry="6.500" fill="#a87f72" opacity="0.7" filter="url(#b2)" transform="rotate(12 70 60)"/>
<ellipse cx="108" cy="80.500" rx="12" ry="6.500" fill="#a87f72" opacity="0.7" filter="url(#b2)" transform="rotate(22 108 79)"/>
<path d="M60 60 C52 74 48 88 48 100" fill="none" stroke="#d6bba8" stroke-width="4" filter="url(#b2)" opacity="0.7"/>
<path d="M48 90 C48 106 49.300 117 52.800 123.500 C55 127.500 58 131.500 62 135.500" fill="none" stroke="url(#rimg)" stroke-width="5.300" filter="url(#b05s)"/>
<path d="M128 60 C128 90 130 110 120 128" fill="none" stroke="#a27a6a" stroke-width="5" filter="url(#b2)" opacity="0.7"/>
<ellipse cx="82" cy="131" rx="11" ry="6" fill="#cbb097" filter="url(#b3)" opacity="0.7"/>
<path d="M70 143.500 C80 148 92 146 104 139" fill="none" stroke="#ad8a76" stroke-width="3" filter="url(#b2)" opacity="0.7"/>
</g>
<path d="M66 45 C72 46 79 50.500 84.500 57" fill="none" stroke="#755447" stroke-width="2.800" stroke-linecap="round" filter="url(#b1)" opacity="0.9"/>
<path d="M97 64.500 C103 64.500 110 67 114 69 C119 71.500 122.500 75 124.500 78.500" fill="none" stroke="#75564a" stroke-width="2.800" stroke-linecap="round" filter="url(#b1)" opacity="0.95"/>
<g filter="url(#b05s)">
<path d="M62.500 59.800 C65.500 57 72 57 76.500 66.500 C73 67.500 66.500 65.500 62.500 59.800Z" fill="#c9bab2"/>
<circle cx="71.900" cy="63" r="3.800" fill="#3d282b"/>
<circle cx="72.400" cy="62.600" r="1.400" fill="#62667c"/>
<path d="M61.500 59.500 C65 55.800 72.500 55.800 77 66.800" fill="none" stroke="#34201f" stroke-width="1.700" stroke-linecap="round"/>
<path d="M63 62 C66 66.500 72 68.800 77 67.800" fill="none" stroke="#8a6258" stroke-width="0.800"/>
</g>
<g filter="url(#b05s)">
<path d="M96.500 78.800 C101 76.500 110 77 113.500 83.500 C110 87 101.500 85.500 96.500 78.800Z" fill="#c6b7af"/>
<circle cx="107.900" cy="81.800" r="3.900" fill="#3d282b"/>
<circle cx="107.600" cy="81.200" r="1.400" fill="#62667c"/>
<path d="M95.500 78.600 C101 75.500 110 76 114 83.500 C116 86 118 87.500 120.500 89" fill="none" stroke="#301d1f" stroke-width="1.700" stroke-linecap="round"/>
<path d="M97.500 81 C102 86.500 109 88.200 114 85.200" fill="none" stroke="#8a6258" stroke-width="0.800"/>
</g>
<path d="M77 74 C73 80 68.500 85 67.500 89.500" fill="none" stroke="#a8826f" stroke-width="2.500" filter="url(#b1)" opacity="0.8"/>
<ellipse cx="68.600" cy="90.800" rx="1.500" ry="1.100" fill="#4a2a30" filter="url(#b05)"/>
<ellipse cx="78" cy="95.800" rx="2" ry="1.100" fill="#50302f" filter="url(#b05)" transform="rotate(25 78 95.800)"/>
<path d="M70 92.500 C73 94.500 76 96 80 97" fill="none" stroke="#a27a6a" stroke-width="1.200" filter="url(#b05)"/>
<ellipse cx="74.500" cy="88.500" rx="2.500" ry="2" fill="#d2b39e" filter="url(#b1)" opacity="0.8"/>
<g filter="url(#b05)">
<path d="M57.300 104 C60 102.500 62 101.800 64 102 C65.500 102.200 66.300 102.700 67.500 102.800 C70 103 72 105 74 107 C77 110 80 113.500 82 116.300 C76 115.500 66 110.500 57.300 104Z" fill="#bf7c7a"/>
<path d="M57.300 104 C66 110.500 76 115.500 82 116.300 C78 119 73 120 68 118.500 C62 116.500 58.500 110.500 57.300 104Z" fill="#c88684"/>
<path d="M57.300 104.100 C66 110.500 76 115.500 82 116.300" fill="none" stroke="#4a2028" stroke-width="1"/>
<ellipse cx="58.200" cy="110" rx="1.100" ry="2.200" fill="#f2e6dc" opacity="0.95"/>
</g>
</g>
</svg><!--/PHOTO--></div>

<div id="bubble" class="abs"></div>
<div id="l1" class="abs bl">"Giữ nguyên khuôn mặt 100% giống ảnh tham chiếu,</div>
<div id="l2" class="abs bl">không được chỉnh sửa hay thay đổi bất kỳ chi tiết nào.</div>
<div id="l3" class="abs bl">Hãy tạo bức ảnh phong cách điện ảnh chân thực, ngườ...</div>
<svg id="chev" style="left:624.3px;top:237.6px" width="8" height="6" viewBox="0 0 8 6"><path d="M0.8 1.2 L3.6 4 L6.4 1.2" fill="none" stroke="#c4c7c5" stroke-width="1.25"/></svg>

<svg id="spark" style="left:240px;top:302px" width="22" height="22" viewBox="0 0 22 22">
<defs><linearGradient id="arcg" x1="0" y1="4" x2="0" y2="18" gradientUnits="userSpaceOnUse"><stop offset="0" stop-color="#5f9a20"/><stop offset="0.35" stop-color="#b5a510"/><stop offset="0.6" stop-color="#dba703"/><stop offset="1" stop-color="#e2a800"/></linearGradient></defs>
<path d="M8 6.700 C8.700 9.100 9.500 9.900 11.900 10.600 C9.500 11.300 8.700 12.100 8 14.500 C7.300 12.100 6.500 11.300 4.100 10.600 C6.500 9.900 7.300 9.100 8 6.700Z" fill="#3f8cfb" stroke="#3f8cfb" stroke-width="0.5" stroke-linejoin="round"/>
<path d="M13.3 4.2 A8.3 8.3 0 0 1 12.9 17.2" fill="none" stroke="url(#arcg)" stroke-width="1.5" stroke-linecap="round"/>
</svg>
<div id="wait" class="abs">Vui lòng chờ trong giây lát...</div>

<svg id="inputbox2" style="left:0;top:0" width="800" height="489" viewBox="0 0 800 489"><rect x="240" y="405.4" width="407.2" height="59.4" rx="13.5" ry="13.5" fill="none" stroke="#44484b" stroke-width="1.35"/></svg>
<div id="ph" class="abs">Mô tả hình ảnh của bạn</div>
<svg id="plus" style="left:251px;top:443px" width="10" height="10" viewBox="0 0 10 10"><path d="M4.7 0.7 V8.7 M0.7 4.7 H8.7" stroke="#c4c7c5" stroke-width="1.1" fill="none"/></svg>
<svg id="tune" style="left:276px;top:442px" width="12" height="11" viewBox="0 0 12 11"><g fill="none" stroke="#c4c7c5" stroke-width="1"><circle cx="2.6" cy="3.4" r="1.1"/><path d="M4.4 3.4 H9.8"/><circle cx="8.5" cy="7.7" r="1.1"/><path d="M1.3 7.7 H6.7"/></g></svg>
<svg id="imgic" style="left:300px;top:443px" width="12" height="11" viewBox="0 0 12 11"><g fill="none" stroke="#a8c7fa" stroke-width="1"><rect x="4.7" y="1.3" width="5.8" height="5.8" rx="1"/><path d="M3 3 V7.9 Q3 8.8 3.9 8.8 H9"/><path d="M1.5 4.7 V9.3 Q1.5 10.2 2.4 10.2 H7.4"/></g><path d="M5.9 5.9 L7 4.2 L7.8 5.2 L8.4 4.6 L9.4 5.9Z" fill="#a8c7fa"/></svg>
<svg id="banana" style="left:315px;top:444px" width="9" height="9" viewBox="0 0 9 9"><path d="M1.3 0.7 L2.6 0.9 C2.7 3.2 4 5.4 8.3 6.5 L8.25 7.2 C6 8.5 2.6 8.7 1.1 7.7 C0.2 6.2 1.2 3.5 1.3 0.7Z" fill="#fbc81c"/><path d="M1 6 C1.3 7.6 5 8.3 8.25 7 C6 8.5 2.6 8.7 1.1 7.7 C0.7 7.1 0.8 6.6 1 6Z" fill="#d9920a"/><path d="M1.3 0.7 L2.6 0.9 L2.6 1.7 L1.35 1.5Z" fill="#8a6a1a"/></svg>
<div id="chip" class="abs">Hình ảnh</div>
<svg id="xic" style="left:364px;top:445.5px" width="7" height="7" viewBox="0 0 7 7"><path d="M0.9 0.9 L5.6 5.6 M5.6 0.9 L0.9 5.6" stroke="#a8c7fa" stroke-width="1.1" fill="none"/></svg>
<div id="stop" class="abs"></div>
<div id="stopsq" class="abs"></div>
<div id="foot" class="abs">Gemini có thể mắc sai sót, vì vậy, nhớ xác minh câu trả lời của Gemini.</div>
</body>
</html>
